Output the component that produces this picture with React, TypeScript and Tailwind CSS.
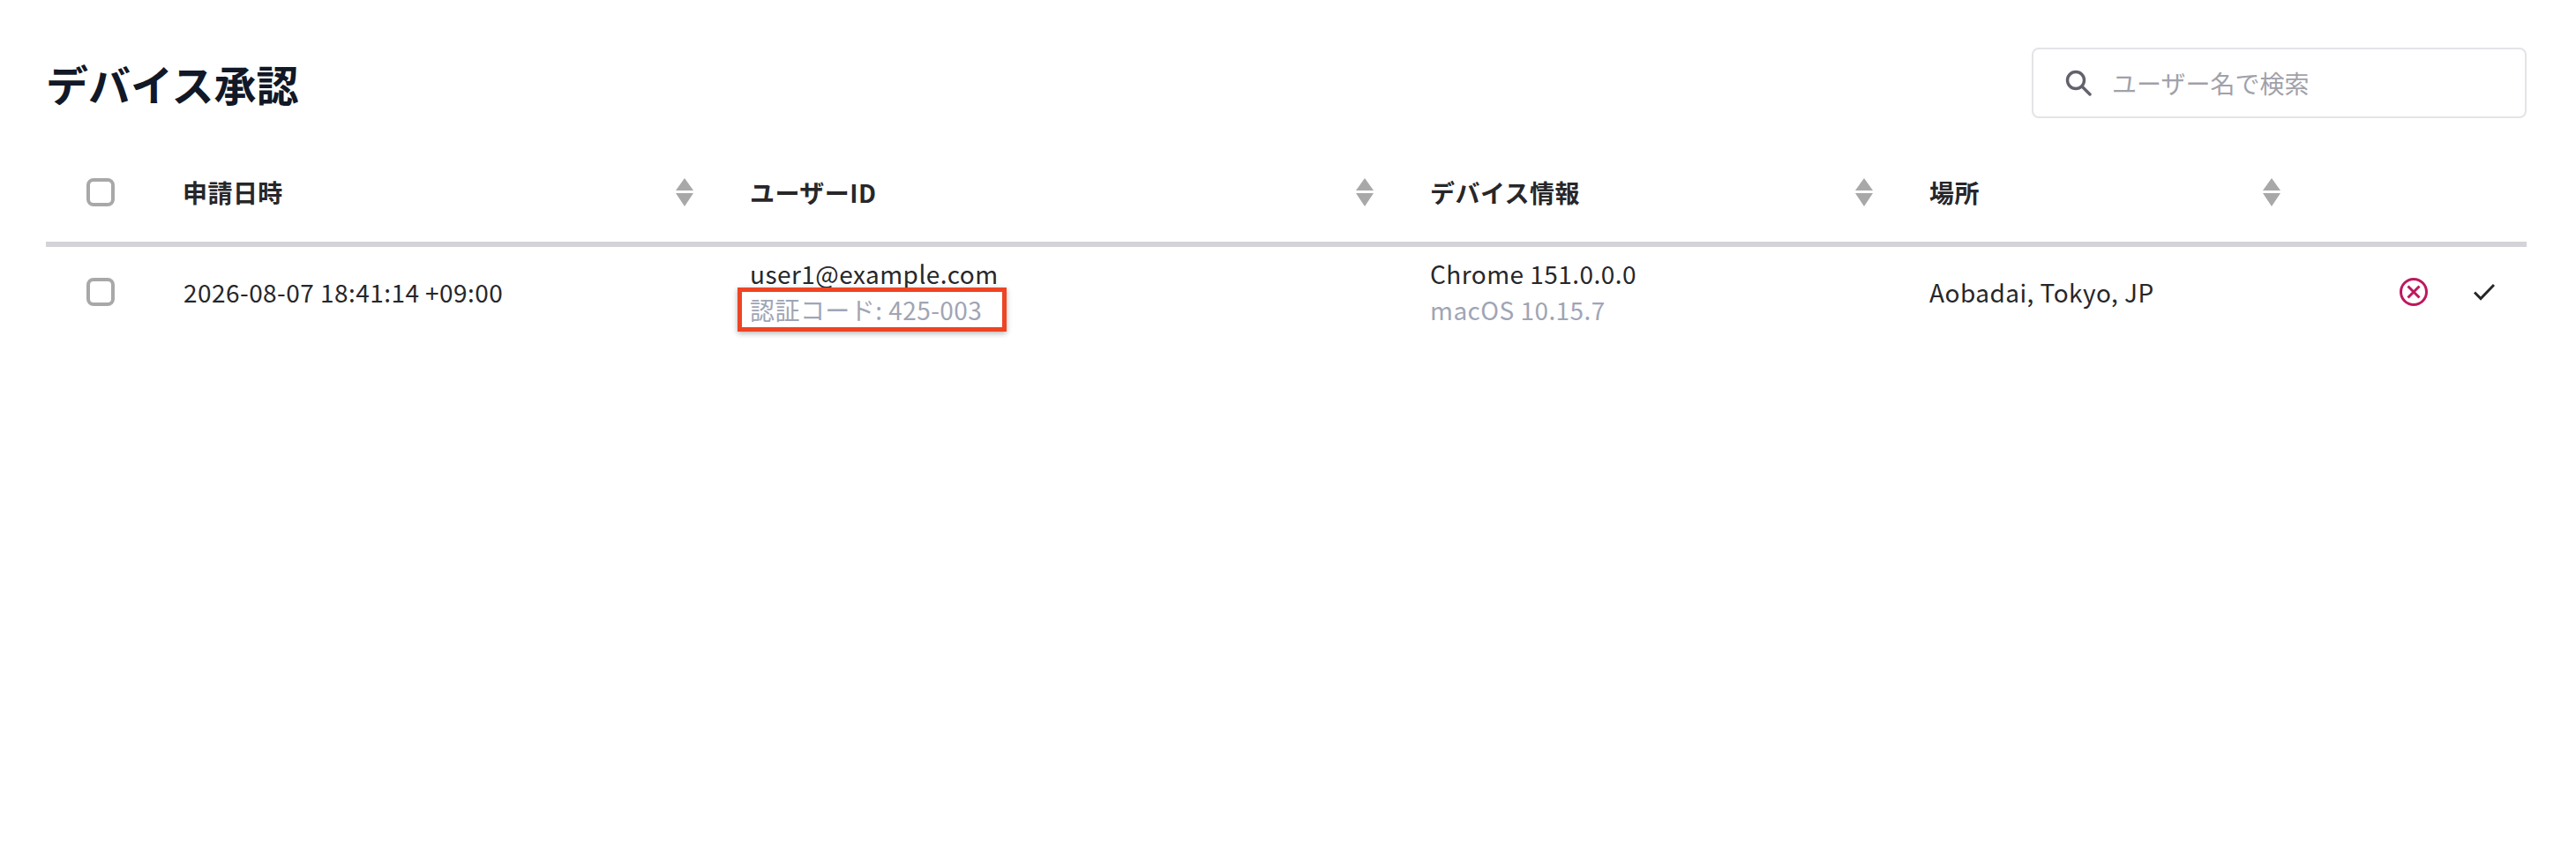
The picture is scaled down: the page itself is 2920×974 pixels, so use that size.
const rowGrid = "grid grid-cols-[124px_643px_771px_566px_462px_246px] items-center";

const columns = ["申請日時", "ユーザーID", "デバイス情報", "場所"];

function Checkbox() {
  return (
    <div className="flex justify-center">
      <span className="block w-[32px] h-[32px] rounded-[8px] border-[4px] border-[#a8a8a8] bg-white" />
    </div>
  );
}

function SortIcon() {
  return (
    <svg width="20" height="32" viewBox="0 0 20 32" className="shrink-0">
      <path d="M10 0 L20 14 L0 14 Z" fill="#a8a8a8" />
      <path d="M0 17 L20 17 L10 32 Z" fill="#a8a8a8" />
    </svg>
  );
}

export default function App() {
  return (
    <div
      className="min-h-[974px] bg-white pl-[52px] pr-[56px] text-[28px] leading-[40px] text-[#27272a]"
      style={{ fontFamily: '"Noto Sans CJK JP", "Noto Sans", sans-serif' }}
    >
      {/* Title + search */}
      <div className="flex items-center justify-between pt-[54px]">
        <h1 className="text-[48px] leading-[80px] font-bold text-[#111827]">デバイス承認</h1>
        <div className="flex items-center w-[561px] h-[80px] border-[2px] border-[#e4e4e7] rounded-[8px] pl-[36px]">
          <svg width="30" height="30" viewBox="0 0 30 30" fill="none" className="shrink-0">
            <circle cx="12" cy="12" r="9.5" stroke="#62626e" strokeWidth="3.4" />
            <path d="M19 19 L28 28" stroke="#62626e" strokeWidth="3.4" strokeLinecap="round" />
          </svg>
          <span className="ml-[23px] text-[#a1a1aa]">ユーザー名で検索</span>
        </div>
      </div>

      {/* Header */}
      <div className={`${rowGrid} h-[112px] mt-[28px] border-b-[6px] border-[#d4d4d8] box-content`}>
        <Checkbox />
        {columns.map((c) => (
          <div key={c} className="flex items-center justify-between pl-[31px] pr-[33px] font-bold tracking-[0.45px]">
            <span>{c}</span>
            <SortIcon />
          </div>
        ))}
        <div />
      </div>

      {/* Row */}
      <div className={`${rowGrid} h-[102px] tracking-[0.45px]`}>
        <Checkbox />
        <div className="pl-[32px]">2026-08-07 18:41:14 +09:00</div>
        <div className="pl-[31px]">
          <div className="-translate-y-[1px]">user1@example.com</div>
          <div className="relative w-fit text-[#9fa5b5]">
            認証コード: 425-003
            <span className="absolute -left-[14px] -right-[28px] -top-[5px] -bottom-[5px] border-[5px] border-[#ee4423] shadow-[0_2px_6px_rgba(0,0,0,0.3)]" />
          </div>
        </div>
        <div className="pl-[31px]">
          <div className="-translate-y-[1px]">Chrome 151.0.0.0</div>
          <div className="text-[#9fa5b5]">macOS 10.15.7</div>
        </div>
        <div className="pl-[31px]">Aobadai, Tokyo, JP</div>
        <div className="flex items-center justify-end pr-[36px] gap-[52px]">
          <svg width="32" height="32" viewBox="0 0 32 32" fill="none">
            <circle cx="16" cy="16" r="14.5" stroke="#be185d" strokeWidth="3" />
            <path d="M9.5 9.5 L22.5 22.5 M22.5 9.5 L9.5 22.5" stroke="#be185d" strokeWidth="3" />
          </svg>
          <svg width="24" height="20" viewBox="0 0 24 20" fill="none">
            <path d="M1 10.5 L8 17.5 L23 2" stroke="#27272a" strokeWidth="3" />
          </svg>
        </div>
      </div>
    </div>
  );
}
